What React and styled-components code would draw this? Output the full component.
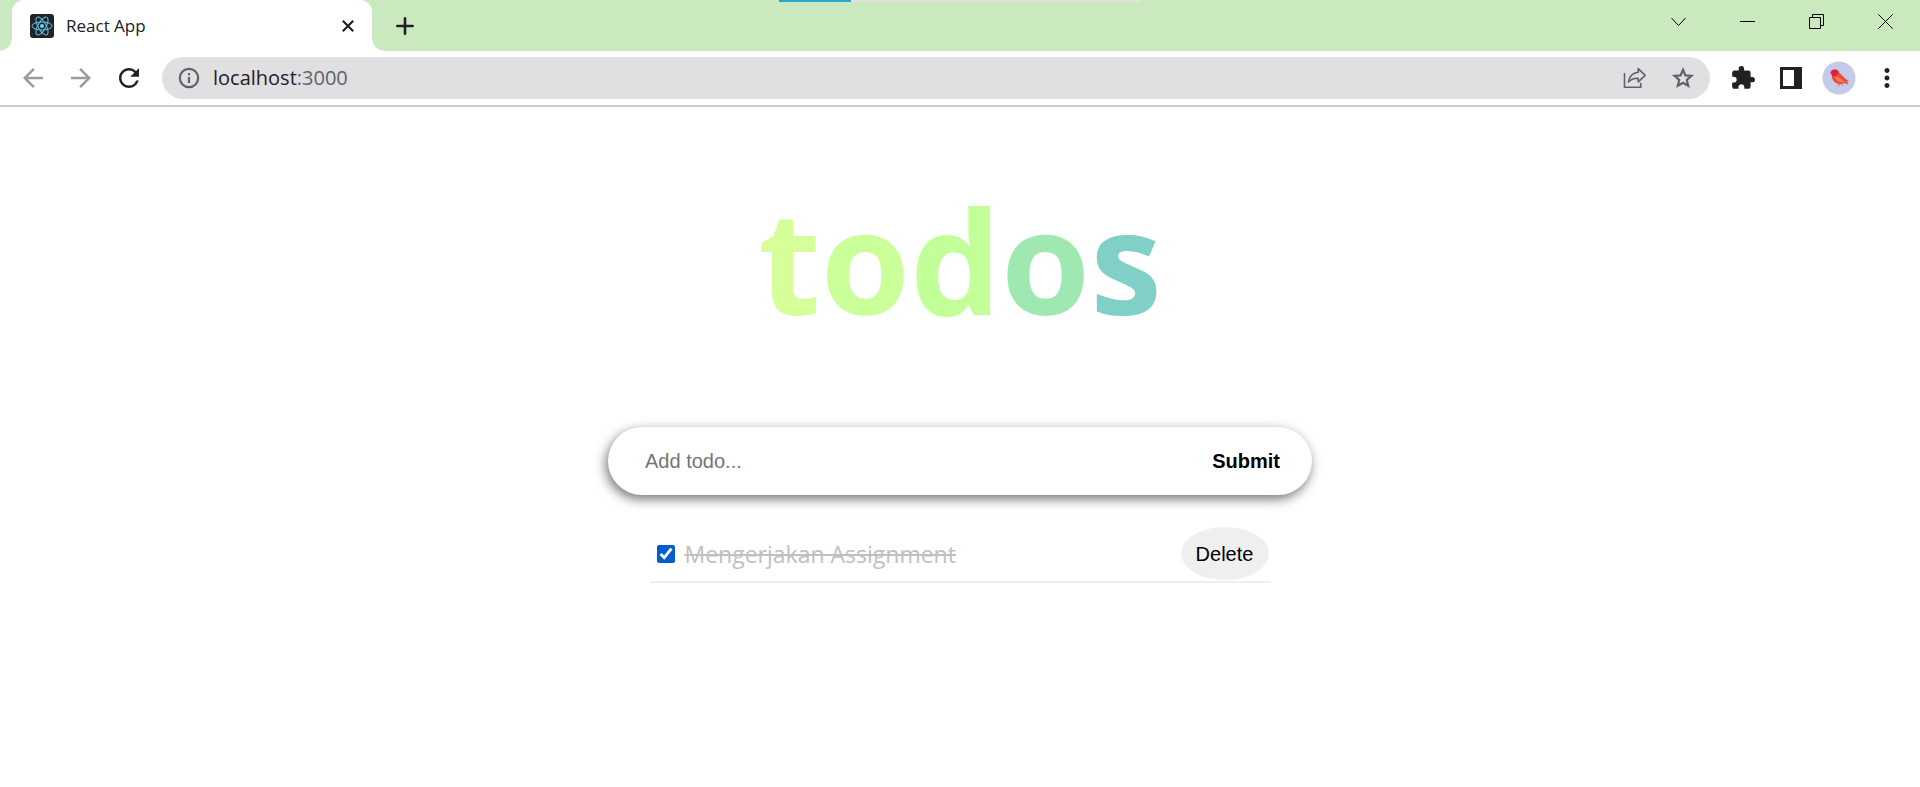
import React, { useState } from "react";
import styled, { createGlobalStyle, css } from "styled-components";
import {
  MdArrowBack,
  MdArrowForward,
  MdRefresh,
  MdExtension,
  MdMoreVert,
} from "react-icons/md";

const GlobalStyle = createGlobalStyle`
  *, *::before, *::after { box-sizing: border-box; }
  body {
    margin: 0;
    background: #fff;
    color: #202124;
    font-family: "Open Sans", "Noto Sans", sans-serif;
  }
`;

const plainButton = css`
  display: flex;
  align-items: center;
  justify-content: center;
  padding: 0;
  border: 0;
  background: none;
  color: inherit;
  cursor: pointer;
`;

const TabStrip = styled.header`
  position: relative;
  display: flex;
  align-items: flex-start;
  height: 51px;
  padding-left: 12px;
  background: #cae9bf;
`;

const LoadTrack = styled.div`
  position: absolute;
  top: 0;
  left: 50%;
  width: 362px;
  height: 2px;
  transform: translateX(-50%);
  background: #e2e2e2;
`;

const LoadBar = styled.div`
  width: 20%;
  height: 100%;
  background: #2ba5ca;
`;

const Tab = styled.div`
  position: relative;
  display: flex;
  align-items: center;
  gap: 12px;
  width: 360px;
  height: 51px;
  padding: 0 18px;
  border-radius: 12px 12px 0 0;
  background: #fff;

  &::before,
  &::after {
    content: "";
    position: absolute;
    bottom: 0;
    width: 12px;
    height: 12px;
  }
  &::before {
    right: 100%;
    background: radial-gradient(circle at 0 0, #cae9bf 11px, #fff 12px);
  }
  &::after {
    left: 100%;
    background: radial-gradient(circle at 100% 0, #cae9bf 11px, #fff 12px);
  }
`;

const TabTitle = styled.span`
  flex: 1;
  font-size: 17px;
  line-height: 24px;
`;

const TabButton = styled.button`
  ${plainButton}
  width: ${(p) => p.$size}px;
  height: ${(p) => p.$size}px;
`;

const NewTab = styled(TabButton)`
  align-self: center;
  margin-left: 20px;
`;

const WindowControls = styled.div`
  display: flex;
  margin-left: auto;
`;

const WindowButton = styled.button`
  ${plainButton}
  width: 69px;
  height: 43px;
  color: #000;
`;

const Toolbar = styled.nav`
  display: flex;
  align-items: center;
  gap: 18px;
  height: 56px;
  padding: 0 18px;
  border-bottom: 2px solid #cbcbcd;
`;

const ToolButton = styled.button`
  ${plainButton}
  flex: none;
  width: 30px;
  height: 30px;
  color: ${(p) => (p.$muted ? "#9b9b9b" : "#202124")};
`;

const AddressBar = styled.div`
  display: flex;
  flex: 1;
  align-items: center;
  gap: 22px;
  height: 42px;
  padding: 0 14px 0 15px;
  border-radius: 21px;
  background: #e0e0e2;
  color: #5f6368;
`;

const Address = styled.a`
  display: flex;
  flex: 1;
  align-items: center;
  gap: 12px;
  color: #5f6368;
  font-size: 20px;
  line-height: 28px;
  text-decoration: none;
`;

const Host = styled.span`
  color: #202124;
`;

const AddressButton = styled.button`
  ${plainButton}
  width: 26px;
  height: 26px;
`;

const Page = styled.main`
  display: flex;
  flex-direction: column;
  align-items: center;
  padding: 54px 16px;
`;

const Title = styled.h1`
  margin: 0;
  font-size: 144px;
  font-weight: 700;
  line-height: 196px;
`;

const Letter = styled.span`
  color: ${(p) => p.$color};
`;

const TodoForm = styled.form`
  display: flex;
  width: 100%;
  max-width: 704px;
  height: 68px;
  margin-top: 70px;
  border-radius: 34px;
  background: #fff;
  box-shadow: -2px 4px 12px rgba(0, 0, 0, 0.55);
`;

const TodoInput = styled.input`
  flex: 1;
  min-width: 0;
  padding: 0 0 0 37px;
  border: 0;
  outline: 0;
  background: none;
  font: 20px/24px "Liberation Sans", Arial, sans-serif;

  &::placeholder {
    color: #757575;
  }
`;

const SubmitButton = styled.button`
  ${plainButton}
  padding: 0 32px;
  color: #000;
  font: bold 20px/24px "Liberation Sans", Arial, sans-serif;
`;

const TodoList = styled.ul`
  width: 100%;
  max-width: 621px;
  margin: 32px 0 0;
  padding: 0;
  list-style: none;
`;

const TodoItem = styled.li`
  display: flex;
  align-items: center;
  justify-content: space-between;
  padding: 0 2px 1px 7px;
  border-bottom: 2px solid #eee;
`;

const TodoLabel = styled.label`
  display: flex;
  align-items: center;
  gap: 10px;
  color: ${(p) => (p.$done ? "#c0c0c0" : "#202124")};
  font-size: 23px;
  line-height: 32px;
`;

const TodoText = styled.span`
  text-decoration: ${(p) => (p.$done ? "line-through" : "none")};
`;

const TodoCheck = styled.input`
  width: 18px;
  height: 18px;
  margin: 0;
  accent-color: #005fcc;
`;

const DeleteButton = styled.button`
  ${plainButton}
  width: 88px;
  height: 53px;
  border-radius: 50%;
  background: #efefef;
  color: #000;
  font: 20px/24px "Liberation Sans", Arial, sans-serif;
`;

const ReactFavicon = () => (
  <svg width="24" height="24" viewBox="0 0 24 24" aria-hidden="true">
    <rect width="24" height="24" rx="3" fill="#20232a" />
    <g fill="none" stroke="#61c9e3" strokeWidth="1">
      <ellipse cx="12" cy="12" rx="10" ry="4" />
      <ellipse cx="12" cy="12" rx="10" ry="4" transform="rotate(60 12 12)" />
      <ellipse cx="12" cy="12" rx="10" ry="4" transform="rotate(120 12 12)" />
    </g>
    <circle cx="12" cy="12" r="2" fill="#61dafb" />
  </svg>
);

const CloseTabIcon = () => (
  <svg width="12" height="12" viewBox="0 0 12 12" stroke="#202124" strokeWidth="2.2">
    <path d="M.8.8l10.4 10.4M11.2.8L.8 11.2" />
  </svg>
);

const PlusIcon = () => (
  <svg width="18" height="18" viewBox="0 0 18 18" stroke="#202124" strokeWidth="2.6" strokeLinecap="round">
    <path d="M9 1.3v15.4M1.3 9h15.4" />
  </svg>
);

const ControlIcon = ({ d }) => (
  <svg width="15" height="15" viewBox="0 0 15 15" fill="none" stroke="currentColor" strokeWidth="1">
    <path d={d} />
  </svg>
);

const InfoIcon = () => (
  <svg width="24" height="24" viewBox="0 0 24 24" fill="none" stroke="currentColor" strokeWidth="2.2">
    <circle cx="12" cy="12" r="9.2" />
    <path d="M12 11v6M12 7v2.300" />
  </svg>
);

const StarIcon = () => (
  <svg width="26" height="26" viewBox="0 0 26 26" fill="none" stroke="currentColor" strokeWidth="2.2">
    <path d="M13 4.800l2.400 5.600 6 .5-4.600 4 1.400 5.900-5.200-3.100-5.200 3.100 1.400-5.900-4.600-4 6-.5z" />
  </svg>
);

const ShareIcon = () => (
  <svg width="24" height="24" viewBox="0 0 24 24" fill="none" stroke="currentColor" strokeWidth="1.6">
    <path d="M1.500 7v14.200h16.200v-4.400" />
    <path d="M15.200 2.600l7 6.700-7 6.600v-3.700c-4.400-.1-7.400 1-9.700 3.900.7-5 3.700-9 9.700-9.800z" strokeLinejoin="round" />
  </svg>
);

const SidePanelIcon = () => (
  <svg width="22" height="22" viewBox="0 0 22 22">
    <path fill="#202124" fillRule="evenodd" d="M0 0h22v22H0zM3 3v16h11V3z" />
  </svg>
);

const AvatarSvg = styled.svg`
  flex: none;
  width: 34px;
  height: 34px;
`;

const BirdAvatar = () => (
  <AvatarSvg viewBox="0 0 34 34" aria-hidden="true">
    <circle cx="17" cy="17" r="16.500" fill="#c5cae9" />
    <path
      fill="#ee4a3c"
      d="M8.500 12.500c.2-2.400 2-4 4.200-4 2.500 0 3.600 1.300 4.600 3.200l5.200 5.100c1.600 1.500 2.100 2.100 4.500 2.700l-1.800.9 1.200 3.400-3.300-1.900c-5 2.200-11.400.7-12.800-4.500-.5-1.900-.3-3.400-.8-4.600z"
    />
    <path fill="#d8203c" d="M8.500 12.500c.2-2.400 2-4 4.200-4 2 0 3.200.9 3.900 2.200-.4 2.600-2.700 4.500-6.100 4.700-.3-1.200-.5-2-2-2.900z" />
    <path fill="#ff7a4e" d="M13 16.500c2.300-1.300 4.800-.3 9.500 4.600-4 .6-8.200-.9-9.500-4.600z" />
    <path d="M17.500 23l-1.300 2.500M19.500 23l1 2" stroke="#d65a3c" strokeWidth=".8" />
  </AvatarSvg>
);

const windowControls = [
  { label: "Search tabs", d: "M.5 4l7 7.500 7-7.500" },
  { label: "Minimize", d: "M0 7.500h15" },
  { label: "Restore", d: "M.5 3.500h11v11h-11zM3.500 3.500v-3h11v11h-3" },
  { label: "Close", d: "M.3.3l14.400 14.400M14.700.3L.3 14.700" },
];

const titleLetters = [
  ["t", "#d6ff99"],
  ["o", "#cbff99"],
  ["d", "#c2ff99"],
  ["o", "#9fe8b1"],
  ["s", "#80d0c7"],
];

export default function App() {
  const [draft, setDraft] = useState("");
  const [todos, setTodos] = useState([{ id: 1, text: "Mengerjakan Assignment", done: true }]);

  const addTodo = (event) => {
    event.preventDefault();
    if (!draft.trim()) return;
    setTodos([...todos, { id: Date.now(), text: draft.trim(), done: false }]);
    setDraft("");
  };
  const toggle = (id) => setTodos(todos.map((t) => (t.id === id ? { ...t, done: !t.done } : t)));
  const remove = (id) => setTodos(todos.filter((t) => t.id !== id));

  return (
    <>
      <GlobalStyle />
      <TabStrip>
        <LoadTrack>
          <LoadBar />
        </LoadTrack>
        <Tab>
          <ReactFavicon />
          <TabTitle>React App</TabTitle>
          <TabButton $size={12} aria-label="Close tab">
            <CloseTabIcon />
          </TabButton>
        </Tab>
        <NewTab $size={26} aria-label="New tab">
          <PlusIcon />
        </NewTab>
        <WindowControls>
          {windowControls.map(({ label, d }) => (
            <WindowButton key={label} aria-label={label}>
              <ControlIcon d={d} />
            </WindowButton>
          ))}
        </WindowControls>
      </TabStrip>

      <Toolbar>
        <ToolButton $muted aria-label="Back">
          <MdArrowBack size={30} />
        </ToolButton>
        <ToolButton $muted aria-label="Forward">
          <MdArrowForward size={30} />
        </ToolButton>
        <ToolButton aria-label="Reload">
          <MdRefresh size={30} />
        </ToolButton>
        <AddressBar>
          <Address href="#">
            <InfoIcon />
            <span>
              <Host>localhost</Host>:3000
            </span>
          </Address>
          <AddressButton aria-label="Share">
            <ShareIcon />
          </AddressButton>
          <AddressButton aria-label="Bookmark">
            <StarIcon />
          </AddressButton>
        </AddressBar>
        <ToolButton aria-label="Extensions">
          <MdExtension size={26} />
        </ToolButton>
        <ToolButton aria-label="Side panel">
          <SidePanelIcon />
        </ToolButton>
        <ToolButton aria-label="Profile">
          <BirdAvatar />
        </ToolButton>
        <ToolButton aria-label="Menu">
          <MdMoreVert size={30} />
        </ToolButton>
      </Toolbar>

      <Page>
        <Title>
          {titleLetters.map(([letter, color], i) => (
            <Letter key={i} $color={color}>
              {letter}
            </Letter>
          ))}
        </Title>
        <TodoForm onSubmit={addTodo}>
          <TodoInput
            type="text"
            aria-label="Add todo"
            placeholder="Add todo..."
            value={draft}
            onChange={(event) => setDraft(event.target.value)}
          />
          <SubmitButton type="submit">Submit</SubmitButton>
        </TodoForm>
        <TodoList>
          {todos.map((todo) => (
            <TodoItem key={todo.id}>
              <TodoLabel $done={todo.done}>
                <TodoCheck type="checkbox" checked={todo.done} onChange={() => toggle(todo.id)} />
                <TodoText $done={todo.done}>{todo.text}</TodoText>
              </TodoLabel>
              <DeleteButton type="button" onClick={() => remove(todo.id)}>
                Delete
              </DeleteButton>
            </TodoItem>
          ))}
        </TodoList>
      </Page>
    </>
  );
}
